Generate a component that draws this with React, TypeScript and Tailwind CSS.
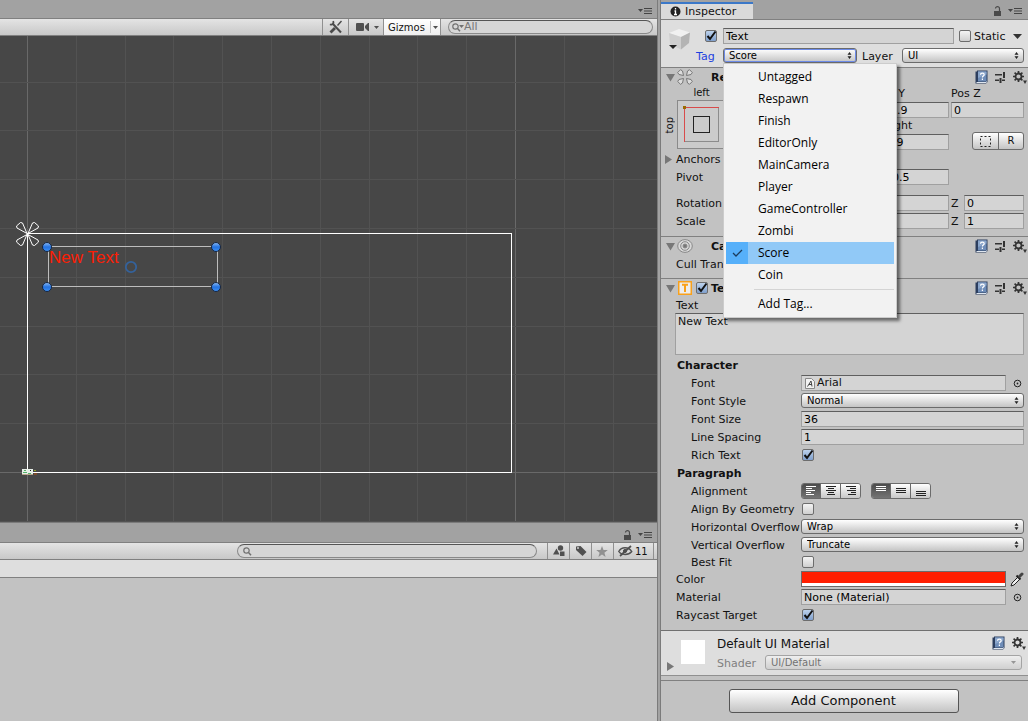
import React, { useState } from 'react';

const tags = [
  'Untagged',
  'Respawn',
  'Finish',
  'EditorOnly',
  'MainCamera',
  'Player',
  'GameController',
  'Zombi',
  'Score',
  'Coin',
];

const fieldClass =
  'h-4 w-full min-w-0 border border-[#a0a0a0] border-t-[#5f5f5f] bg-[#d4d4d4] px-[2px] text-[11px] leading-[14px] text-black outline-none';

const popupClass =
  'block w-full appearance-none rounded-[3px] border border-[#6b6b6b] bg-gradient-to-b from-white to-[#c4c4c4] pl-[5px] pr-4 text-[10px] leading-3 text-black outline-none';

/* ---------- Icons ---------- */

function PaneMenuIcon() {
  return (
    <svg width="14" height="8" viewBox="0 0 14 8" fill="#444">
      <path d="M0 2h5L2.500 5z" />
      <path d="M6 1h8v1H6zM6 3.500h8v1H6zM6 6h8v1H6z" />
    </svg>
  );
}

function LockIcon() {
  return (
    <svg width="9" height="10" viewBox="0 0 9 10">
      <rect x="1" y="5" width="7" height="5" fill="#4a4a4a" />
      <path d="M2.500 2.500C2.500 0 6.500 0 6.500 2.500V5" fill="none" stroke="#4a4a4a" strokeWidth="1.200" />
    </svg>
  );
}

function Caret({ className = '' }: { className?: string }) {
  return (
    <svg width="5" height="3" viewBox="0 0 5 3" className={className}>
      <path d="M0 0h5L2.500 3z" fill="#505050" />
    </svg>
  );
}

function SearchIcon({ caret = false }: { caret?: boolean }) {
  return (
    <svg width="12" height="9" viewBox="0 0 12 9" className="shrink-0">
      <circle cx="3.500" cy="3.500" r="2.700" fill="none" stroke="#707070" strokeWidth="1.200" />
      <path d="M5.500 5.500L8 8.200" stroke="#707070" strokeWidth="1.500" />
      {caret && <path d="M7 2h5L9.500 5z" fill="#707070" />}
    </svg>
  );
}

function ToolsIcon() {
  return (
    <svg width="14" height="14" viewBox="0 0 14 14" fill="none" stroke="#4a4a4a">
      <path d="M4 4l8 8.500" strokeWidth="2" />
      <path d="M1 4.200c2.200 1.200 4.200-.8 3.200-3.200" strokeWidth="1.800" />
      <path d="M12.500 1L8.500 5.500" strokeWidth="1.400" />
      <path d="M6 8l-4.500 4.500" strokeWidth="2.800" />
    </svg>
  );
}

function CameraIcon() {
  return (
    <svg width="13" height="10" viewBox="0 0 13 10" fill="#505050">
      <rect x="0" y="1" width="8" height="8" rx="1" />
      <path d="M9 4l3-3h1v8h-1L9 6z" />
    </svg>
  );
}

function ShapesIcon() {
  return (
    <svg width="12" height="12" viewBox="0 0 12 12" fill="#505050">
      <circle cx="7.500" cy="3" r="2.700" />
      <path d="M0 9.500L3.500 3.500 6.500 9.500z" />
      <rect x="7" y="6.500" width="4.500" height="4.500" />
    </svg>
  );
}

function TagIcon() {
  return (
    <svg width="12" height="12" viewBox="0 0 12 12">
      <path d="M1 1.500L5.500 1 11.500 7 7.500 11 1 5z" fill="#505050" />
      <circle cx="3" cy="3" r="1" fill="#cfcfcf" />
    </svg>
  );
}

function StarIcon() {
  return (
    <svg width="12" height="11" viewBox="0 0 12 11">
      <path d="M6 0l1.500 3.900 4.300.2-3.400 2.700 1.200 4.200L6 8.600 2.400 11l1.200-4.200L.2 4.100l4.300-.2z" fill="#909090" />
    </svg>
  );
}

function HiddenIcon() {
  return (
    <svg width="15" height="12" viewBox="0 0 15 12" fill="none" stroke="#505050">
      <path d="M.7 6.500C3.500 1.500 10.500 1.500 13.800 6.500 10.500 10.500 3.500 10.500.7 6.500z" strokeWidth="1.300" />
      <circle cx="7" cy="6" r="1.600" fill="#505050" />
      <path d="M2 11L13 1" strokeWidth="1.700" />
    </svg>
  );
}

function HelpIcon() {
  return (
    <svg width="13" height="14" viewBox="0 0 13 14">
      <path d="M.5 1.500h1.500V.5h10.500v11.500l-1.500 1.500H.5z" fill="#2c3e5e" />
      <rect x="3" y="1.500" width="8.500" height="10" fill="#6f8db8" />
      <path d="M3 1.500h8.500v3L3 8z" fill="#8ba6cb" />
      <path d="M1.500 12h9.500l1-1v1l-1 1H1.500z" fill="#dfe6ef" />
      <path d="M5.500 4.800c0-2.200 3.700-2.200 3.700 0 0 1.300-1.800 1.200-1.800 2.600M7.400 8.500V10" fill="none" stroke="#fff" strokeWidth="1.200" />
    </svg>
  );
}

function PresetIcon() {
  return (
    <svg width="11" height="11" viewBox="0 0 11 11" fill="#333">
      <path d="M0 2h7v1.500H0zM8 0h2v6H8z" />
      <path d="M0 7.500h4V9H0zM4.500 6h2v5h-2zM7 7.500h3V9H7z" />
    </svg>
  );
}

function GearIcon() {
  return (
    <svg width="14" height="13" viewBox="0 0 14 13">
      <circle cx="5.500" cy="5.500" r="3" fill="none" stroke="#333" strokeWidth="1.800" />
      <path
        d="M5.500 0v2M5.500 9v2M0 5.500h2M9 5.500h2M1.600 1.600L3 3M8 8l1.400 1.400M9.400 1.600L8 3M3 8L1.600 9.400"
        stroke="#333"
        strokeWidth="1.700"
      />
      <path d="M10 9.500h4l-2 3.500z" fill="#333" />
    </svg>
  );
}

function RectTransformIcon() {
  return (
    <svg width="16" height="16" viewBox="0 0 16 16" fill="#dcdcdc" stroke="#777" strokeWidth="1">
      <path d="M3.500.7L.7 3.500l1.300 2L6.500 6.500 5.500 2z" />
      <path d="M12.500.7l2.800 2.800-1.300 2-4.500 1 1-4.500z" />
      <path d="M3.500 15.300L.7 12.500l1.300-2 4.500-1-1 4.500z" />
      <path d="M12.500 15.300l2.800-2.800-1.300-2-4.500-1 1 4.500z" />
    </svg>
  );
}

function CanvasRendererIcon() {
  return (
    <svg width="16" height="14" viewBox="0 0 16 14" fill="none" stroke="#888">
      <ellipse cx="8" cy="7" rx="7.300" ry="6.400" fill="#d8d8d8" />
      <circle cx="8" cy="7" r="4.300" />
      <circle cx="8" cy="7" r="2" fill="#777" />
    </svg>
  );
}

function TextIcon() {
  return (
    <svg width="14" height="14" viewBox="0 0 14 14">
      <rect x=".75" y=".75" width="12.500" height="12.500" fill="#eee" stroke="#f9a11b" strokeWidth="1.500" />
      <path d="M4 3.800h6M7 3.800V11" stroke="#f9a11b" strokeWidth="2" />
    </svg>
  );
}

function CubeIcon() {
  return (
    <svg width="24" height="24" viewBox="0 0 24 24">
      <path d="M11 1l11 3.500-9 4.500L1 5z" fill="#f1f1f1" />
      <path d="M1 5l12 4v12.500L2 16z" fill="#cfcfcf" />
      <path d="M22 4.500L13 9v12.500l8-6.500z" fill="#b4b4b4" />
      <path d="M1 17h8l-4 4z" fill="#222" />
    </svg>
  );
}

function PickerIcon() {
  return (
    <svg width="9" height="9" viewBox="0 0 9 9">
      <circle cx="4.500" cy="4.500" r="3.300" fill="none" stroke="#222" />
      <circle cx="4.500" cy="4.500" r=".9" fill="#222" />
    </svg>
  );
}

function EyedropperIcon() {
  return (
    <svg width="14" height="15" viewBox="0 0 14 15">
      <path d="M1 14l1-3 6-6 2 2-6 6z" fill="#eee" stroke="#222" />
      <path d="M6.500 3.500l4 4" stroke="#222" strokeWidth="2" />
      <path d="M9.500 4.500L12 2" stroke="#444" strokeWidth="3" strokeLinecap="round" />
    </svg>
  );
}

function Foldout({ open = false }: { open?: boolean }) {
  return (
    <svg width="9" height="9" viewBox="0 0 9 9" fill="#777">
      <path d={open ? 'M0 1h9L4.500 8.500z' : 'M1 0l7 4.500L1 9z'} />
    </svg>
  );
}

/* ---------- Controls ---------- */

function Checkbox({ id, label, checked = false }: { id: string; label?: string; checked?: boolean }) {
  return (
    <span className="relative inline-block h-3 w-3 shrink-0">
      <input
        id={id}
        type="checkbox"
        aria-label={label}
        defaultChecked={checked}
        className="peer block h-3 w-3 appearance-none rounded-[2px] border border-[#6d6d6d] bg-gradient-to-b from-[#f4f4f4] to-[#cfcfcf] checked:from-[#bdd2ec] checked:to-[#7f9fcc]"
      />
      <svg
        viewBox="0 0 12 12"
        className="pointer-events-none absolute inset-0 hidden h-3 w-3 overflow-visible peer-checked:block"
      >
        <path d="M2.500 6L5 9 10.500 1.500" fill="none" stroke="#111" strokeWidth="2" />
      </svg>
    </span>
  );
}

function PopupArrows() {
  return (
    <svg width="5" height="7" viewBox="0 0 5 7" className="pointer-events-none absolute right-[5px] top-1">
      <path d="M.5 2.800h4L2.500 0zM.5 4.200h4L2.500 7z" fill="#222" />
    </svg>
  );
}

function Popup({ id, options, disabled = false }: { id: string; options: string[]; disabled?: boolean }) {
  return (
    <span className={`relative mb-px block min-w-0 flex-1 ${disabled ? 'opacity-50' : ''}`}>
      <select id={id} disabled={disabled} className={`${popupClass} h-[15px]`}>
        {options.map((option) => (
          <option key={option}>{option}</option>
        ))}
      </select>
      {disabled ? <Caret className="pointer-events-none absolute right-[6px] top-[6px]" /> : <PopupArrows />}
    </span>
  );
}

interface RowProps {
  label: string;
  htmlFor?: string;
  nested?: boolean;
  short?: boolean;
  children?: React.ReactNode;
}

function Row({ label, htmlFor, nested = false, short = false, children }: RowProps) {
  return (
    <div className={`flex items-center pr-1 ${short ? 'h-4' : 'h-[18px]'}`}>
      <label
        htmlFor={htmlFor}
        className={`w-[140px] shrink-0 whitespace-nowrap pt-[2px] ${nested ? 'pl-[30px]' : 'pl-[15px]'}`}
      >
        {label}
      </label>
      {children}
    </div>
  );
}

interface ComponentHeaderProps {
  title: string;
  icon: React.ReactNode;
  checkbox?: React.ReactNode;
}

function ComponentHeader({ title, icon, checkbox }: ComponentHeaderProps) {
  return (
    <div className="flex h-[18px] items-center pl-[5px] pr-px">
      <Foldout open />
      <span className="ml-[2px] flex w-4 justify-center">{icon}</span>
      <span className="flex w-[18px] items-center pl-[3px]">{checkbox}</span>
      <h2 className="flex-1 pt-[2px] font-bold">{title}</h2>
      <div className="flex items-center gap-[7px]">
        <HelpIcon />
        <PresetIcon />
        <GearIcon />
      </div>
    </div>
  );
}

function AxisField({ axis, name, value }: { axis: string; name: string; value?: string }) {
  return (
    <label className="flex items-center gap-1">
      <span className="w-[9px] shrink-0 pt-[2px]">{axis}</span>
      <input aria-label={`${name} ${axis}`} defaultValue={value} className={fieldClass} />
    </label>
  );
}

function StackedField({ label, value }: { label: string; value: string }) {
  return (
    <label className="block">
      <span className="block h-4 leading-4">{label}</span>
      <input defaultValue={value} className={`${fieldClass} block`} />
    </label>
  );
}

function AlignGroup({ names, icons }: { names: string[]; icons: string[] }) {
  return (
    <div className="flex h-4 overflow-hidden rounded-[3px] border border-[#6b6b6b]">
      {icons.map((lines, i) => (
        <button
          key={names[i]}
          type="button"
          aria-label={names[i]}
          aria-pressed={i === 0}
          className={
            i === 0
              ? 'flex w-[18px] items-center justify-center bg-gradient-to-b from-[#4c4c4c] to-[#747474] text-white'
              : 'flex w-5 items-center justify-center border-l border-[#6b6b6b] bg-gradient-to-b from-white to-[#c8c8c8] text-[#222]'
          }
        >
          <svg width="12" height="10" viewBox="0 0 12 10" fill="none" stroke="currentColor" strokeWidth="1">
            <path d={lines} />
          </svg>
        </button>
      ))}
    </div>
  );
}

/* ---------- Scene view ---------- */

function SceneToolbar() {
  return (
    <div className="flex h-[18px] items-stretch justify-end border-y border-[#808080] bg-gradient-to-b from-[#e4e4e4] to-[#c8c8c8] pr-1">
      <button type="button" aria-label="Tools" className="flex w-[26px] items-center justify-center border-l border-[#909090]">
        <ToolsIcon />
      </button>
      <button type="button" aria-label="Scene camera" className="flex w-[35px] items-center justify-between border-l border-[#909090] pl-[7px] pr-1">
        <CameraIcon />
        <Caret />
      </button>
      <button type="button" className="flex w-[58px] items-center border-x border-[#909090] bg-gradient-to-b from-white to-[#eeeeee] pl-1 text-[10px]">
        <span className="w-[42px] pt-px text-left">Gizmos</span>
        <span className="flex h-3 items-center border-l border-[#c0c0c0] pl-[2px]">
          <Caret />
        </span>
      </button>
      <label className="my-px ml-[7px] flex h-[14px] w-[205px] items-center rounded-full border border-[#8a8a8a] border-t-[#555] bg-[#d6d6d6] pl-[3px]">
        <SearchIcon caret />
        <input aria-label="Search scene" placeholder="All" className="min-w-0 flex-1 bg-transparent text-[11px] leading-3 outline-none placeholder:text-[#777]" />
      </label>
    </div>
  );
}

function SceneCanvas() {
  const handles = [
    [47, 211],
    [216, 211],
    [47, 251],
    [216, 251],
  ];
  const columns = Array.from({ length: 60 }, (_, i) => Math.round(27 + (i - 1) * 48.8));
  const rows = Array.from({ length: 40 }, (_, i) => Math.round(436 + (i - 20) * 48.8));

  return (
    <svg className="block min-h-[480px] w-full flex-1 bg-[#474747]">
      <defs>
        <linearGradient id="handle" x1="0" y1="0" x2="0" y2="1">
          <stop offset="0" stopColor="#8dbcf5" />
          <stop offset="0.5" stopColor="#2472e0" />
          <stop offset="1" stopColor="#3f92f5" />
        </linearGradient>
      </defs>
      <g shapeRendering="crispEdges">
        {columns.map((x, i) => (
          <rect key={x} x={x} y="0" width="1" height="100%" fill={i % 10 === 1 ? '#696969' : '#525252'} />
        ))}
        {rows.map((y, i) => (
          <rect key={y} x="0" y={y} width="100%" height="1" fill={i % 10 === 0 ? '#696969' : '#525252'} />
        ))}
        {/* canvas bounds */}
        <rect x="27.500" y="197.500" width="484" height="239" fill="none" stroke="#fff" />
        {/* selected text rect */}
        <rect x="48.500" y="210.500" width="169" height="40" fill="none" stroke="#bdbdbd" />
      </g>
      {/* anchors */}
      <g fill="none" stroke="#fff" strokeWidth="1">
        <path d="M27 197.500L17 192l-.5-2 4-3.500 2 .5zM28 197.500l4.500-10.500 2-.5 4 3.500-.5 2zM27 198.500l-10 5.500-.5 2 4 3.500 2-.5zM28 198.500l4.500 10.500 2 .5 4-3.500-.5-2z" />
      </g>
      <text x="49" y="227" fill="#fb1e05" className="font-['Liberation_Sans',sans-serif] text-[17px]">
        New Text
      </text>
      {handles.map(([cx, cy]) => (
        <circle key={`${cx}-${cy}`} cx={cx} cy={cy} r="4.500" fill="url(#handle)" stroke="#16253f" />
      ))}
      <circle cx="131" cy="231" r="5.200" fill="none" stroke="#34629c" strokeWidth="1.800" />
      {/* game objects near the world origin */}
      <g shapeRendering="crispEdges">
        <rect x="22" y="433" width="11" height="6" fill="#e8efe8" />
        <path d="M23 436h4v1h-4zM28 437h3v1h-3zM24 434h2v1h-2z" fill="#55b36a" />
        <rect x="30" y="434" width="1" height="1" fill="#222" />
        <rect x="22" y="438" width="11" height="1" fill="#b8a58c" />
        <rect x="34" y="434" width="2" height="1" fill="#8aa520" />
        <rect x="34" y="437" width="3" height="2" fill="#7b4a2a" />
      </g>
    </svg>
  );
}

function ProjectPanel() {
  return (
    <section className="flex h-[199px] shrink-0 flex-col">
      <div className="flex h-5 items-center justify-end gap-[6px] border-t border-[#7b7b7b] pr-[5px] pt-[5px]">
        <LockIcon />
        <PaneMenuIcon />
      </div>
      <div className="flex h-[18px] items-stretch justify-end border-y border-[#808080] bg-gradient-to-b from-[#e4e4e4] to-[#c8c8c8] pr-[3px]">
        <label className="my-px mr-[10px] flex h-[14px] w-[300px] items-center rounded-full border border-[#8a8a8a] border-t-[#555] bg-[#d6d6d6] pl-[5px]">
          <SearchIcon />
          <input aria-label="Search assets" className="min-w-0 flex-1 bg-transparent text-[11px] leading-3 outline-none" />
        </label>
        <button type="button" aria-label="Search by type" className="flex w-[22px] items-center justify-center border-l border-[#909090]">
          <ShapesIcon />
        </button>
        <button type="button" aria-label="Search by label" className="flex w-[22px] items-center justify-center border-l border-[#909090]">
          <TagIcon />
        </button>
        <button type="button" aria-label="Save search" className="flex w-[22px] items-center justify-center border-l border-[#909090] pr-[2px]">
          <StarIcon />
        </button>
        <button type="button" className="flex w-[41px] items-center gap-[2px] border-x border-[#909090] pl-1 text-[10px]">
          <HiddenIcon />
          <span className="pt-px">11</span>
        </button>
      </div>
      <div className="h-[18px] border-b border-[#808080] bg-[#dedede]" />
      <div className="flex-1 bg-[#c2c2c2]" />
    </section>
  );
}

/* ---------- Inspector ---------- */

function TagMenu({ tag, onSelect }: { tag: string; onSelect: (tag: string) => void }) {
  return (
    <div className="absolute left-0 top-full z-10 w-[174px] border border-[#cccccc] bg-[#f2f2f2] p-[2px] font-['Open_Sans',sans-serif] text-[12px] leading-[22px] text-black shadow-[3px_3px_3px_rgba(0,0,0,0.5)]">
      {tags.map((name) => (
        <button
          key={name}
          type="button"
          onClick={() => onSelect(name)}
          className={`flex h-[22px] w-full items-center text-left ${name === tag ? 'bg-[#91c9f7]' : ''}`}
        >
          <span className={`mr-[10px] flex h-[22px] w-[22px] items-center justify-center ${name === tag ? 'bg-[#56b0fa]' : ''}`}>
            {name === tag && (
              <svg width="11" height="8" viewBox="0 0 11 8">
                <path d="M1 4l3 3 6-6" fill="none" stroke="#1c3c5c" strokeWidth="1.300" />
              </svg>
            )}
          </span>
          {name}
        </button>
      ))}
      <div className="ml-7 flex h-[7px] items-center">
        <hr className="w-full border-[#d4d4d4]" />
      </div>
      <button type="button" className="block h-[22px] w-full pl-8 text-left">
        Add Tag...
      </button>
    </div>
  );
}

function ObjectHeader() {
  const [tag, setTag] = useState('Score');
  const [open, setOpen] = useState(true);

  return (
    <div className="flex h-12 border-b border-[#808080] bg-[#dedede] pl-[7px] pr-1 pt-[7px]">
      <div className="w-[26px] shrink-0 pt-px">
        <CubeIcon />
      </div>
      <div className="min-w-0 flex-1">
        <div className="flex h-[18px] items-center">
          <span className="flex w-[29px] shrink-0 justify-end pr-[6px]">
            <Checkbox id="active" label="Active" checked />
          </span>
          <input aria-label="Name" defaultValue="Text" className={`${fieldClass} flex-1`} />
          <span className="ml-[5px] flex shrink-0 items-center gap-[3px]">
            <Checkbox id="static" />
            <label htmlFor="static" className="w-[39px] pt-px">
              Static
            </label>
          </span>
          <svg width="9" height="5" viewBox="0 0 9 5" className="mr-[2px] shrink-0">
            <path d="M0 0h9L4.500 5z" fill="#333" />
          </svg>
        </div>
        <div className="mt-[2px] flex h-[18px] items-center">
          <label htmlFor="tag" className="w-[29px] shrink-0 pl-[2px] pt-px text-[#1c3fe0]">
            Tag
          </label>
          <span className="relative mb-px block w-[134px] shrink-0">
            <select
              id="tag"
              value={tag}
              onChange={(e) => setTag(e.target.value)}
              onMouseDown={() => setOpen(!open)}
              className={`${popupClass} h-[15px] border-[#3d62d8] ring-1 ring-[#6d8be8] ring-inset`}
            >
              {tags.map((name) => (
                <option key={name}>{name}</option>
              ))}
            </select>
            <PopupArrows />
            {open && (
              <TagMenu
                tag={tag}
                onSelect={(name) => {
                  setTag(name);
                  setOpen(false);
                }}
              />
            )}
          </span>
          <label htmlFor="layer" className="w-[45px] shrink-0 pl-[5px] pt-px">
            Layer
          </label>
          <Popup id="layer" options={['UI']} />
        </div>
      </div>
    </div>
  );
}

function RectTransform() {
  return (
    <section className="border-b border-[#808080] pb-[6px]">
      <ComponentHeader title="Rect Transform" icon={<RectTransformIcon />} />
      <div className="flex h-16 pr-1">
        <div className="flex w-[140px] shrink-0">
          <div className="flex w-4 items-center justify-center pl-[2px] pt-[14px]">
            <span className="rotate-180 text-[10px] leading-3 [writing-mode:vertical-rl]">top</span>
          </div>
          <div>
            <div className="h-[14px] pt-px text-center text-[10px] leading-3">left</div>
            <button type="button" aria-label="Anchor presets" className="block border border-[#8a8a8a] bg-[#cbcbcb]">
              <svg width="47" height="47" viewBox="0 0 47 47" fill="none">
                <rect x="6.500" y="6.500" width="34" height="34" stroke="#8c8c8c" />
                <path d="M6.500 41V6.500H41" stroke="#d84b4b" />
                <rect x="15.500" y="15.500" width="16" height="16" stroke="#222" />
                <rect x="5" y="5" width="3" height="3" fill="#9b6a00" />
              </svg>
            </button>
          </div>
        </div>
        <div className="grid flex-1 grid-cols-3 gap-x-[2px]">
          <StackedField label="Pos X" value="104.9" />
          <StackedField label="Pos Y" value="-33.9" />
          <StackedField label="Pos Z" value="0" />
          <StackedField label="Width" value="169" />
          <StackedField label="Height" value="40.9" />
          <div className="flex items-end justify-end">
            <div className="flex h-[18px] overflow-hidden rounded-[3px] border border-[#6b6b6b] bg-gradient-to-b from-white to-[#c4c4c4] text-[10px]">
              <button type="button" aria-label="Blueprint mode" className="flex w-[25px] items-center justify-center">
                <svg width="12" height="11" viewBox="0 0 12 11">
                  <rect x=".5" y=".5" width="10" height="10" fill="none" stroke="#222" strokeDasharray="2 2" />
                </svg>
              </button>
              <button type="button" className="w-[25px] border-l border-[#6b6b6b]">
                R
              </button>
            </div>
          </div>
        </div>
      </div>
      <button type="button" className="flex h-[18px] items-center gap-[3px] pl-[3px]">
        <Foldout />
        <span className="pt-px">Anchors</span>
      </button>
      <Row label="Pivot">
        <div className="grid flex-1 grid-cols-3 gap-x-[2px]">
          <AxisField name="Pivot" axis="X" value="0.5" />
          <AxisField name="Pivot" axis="Y" value="0.5" />
        </div>
      </Row>
      <div className="mt-2">
        <Row label="Rotation">
          <div className="grid flex-1 grid-cols-3 gap-x-[2px]">
            <AxisField name="Rotation" axis="X" />
            <AxisField name="Rotation" axis="Y" />
            <AxisField name="Rotation" axis="Z" value="0" />
          </div>
        </Row>
        <Row label="Scale">
          <div className="grid flex-1 grid-cols-3 gap-x-[2px]">
            <AxisField name="Scale" axis="X" />
            <AxisField name="Scale" axis="Y" />
            <AxisField name="Scale" axis="Z" value="1" />
          </div>
        </Row>
      </div>
    </section>
  );
}

function CanvasRenderer() {
  return (
    <section className="border-b border-[#808080] pb-[5px]">
      <ComponentHeader title="Canvas Renderer" icon={<CanvasRendererIcon />} />
      <Row label="Cull Transparent Mesh" htmlFor="cull">
        <Checkbox id="cull" />
      </Row>
    </section>
  );
}

function TextComponent() {
  return (
    <section className="border-b border-[#707070] pb-[6px]">
      <ComponentHeader
        title="Text (Script)"
        icon={<TextIcon />}
        checkbox={<Checkbox id="text-enabled" label="Text enabled" checked />}
      />
      <div className="pl-[14px] pr-1">
        <label htmlFor="text" className="block h-4 pl-px pt-px leading-4">
          Text
        </label>
        <textarea
          id="text"
          defaultValue="New Text"
          className="block h-[42px] w-full resize-none border border-[#a0a0a0] border-t-[#5f5f5f] bg-[#d4d4d4] px-[2px] pt-px leading-[14px] outline-none"
        />
      </div>

      <h3 className="mt-px h-[18px] pl-4 pt-px font-bold leading-[18px]">Character</h3>
      <Row nested label="Font" htmlFor="font">
        <span className="flex h-4 min-w-0 flex-1 items-center border border-[#a0a0a0] border-t-[#5f5f5f] bg-[#d4d4d4] pl-[3px]">
          <svg width="10" height="12" viewBox="0 0 10 12">
            <path d="M.5 1.500h6l3 3v7h-9z" fill="#f2f2f2" stroke="#888" />
            <path d="M2.500 9.500L6 4l1 5.500M4 7.500h3" fill="none" stroke="#444" />
          </svg>
          <input id="font" readOnly defaultValue="Arial" className="min-w-0 flex-1 bg-transparent pl-[2px] leading-[14px] outline-none" />
        </span>
        <button type="button" aria-label="Select font" className="flex w-[18px] justify-end pr-[2px]">
          <PickerIcon />
        </button>
      </Row>
      <Row nested label="Font Style" htmlFor="font-style">
        <Popup id="font-style" options={['Normal', 'Bold', 'Italic']} />
      </Row>
      <Row nested label="Font Size" htmlFor="font-size">
        <input id="font-size" defaultValue="36" className={fieldClass} />
      </Row>
      <Row nested label="Line Spacing" htmlFor="line-spacing">
        <input id="line-spacing" defaultValue="1" className={fieldClass} />
      </Row>
      <Row nested label="Rich Text" htmlFor="rich-text">
        <span className="flex pl-px">
          <Checkbox id="rich-text" checked />
        </span>
      </Row>

      <h3 className="h-[18px] pl-4 pt-px font-bold leading-[18px]">Paragraph</h3>
      <Row nested label="Alignment">
        <div className="flex gap-[10px]">
          <AlignGroup
            names={['Left', 'Center', 'Right']}
            icons={[
              'M1 .5h10M1 2.500h6M1 4.500h9M1 6.500h5M1 8.500h8',
              'M1 .5h10M3 2.500h6M1 4.500h10M3 6.500h6M2 8.500h8',
              'M1 .5h10M5 2.500h6M2 4.500h9M6 6.500h5M3 8.500h8',
            ]}
          />
          <AlignGroup
            names={['Top', 'Middle', 'Bottom']}
            icons={['M1 .5h10M1 2.500h10M1 4.500h10', 'M1 2.500h10M1 4.500h10M1 6.500h10', 'M1 5.500h10M1 7.500h10M1 9.500h10']}
          />
        </div>
      </Row>
      <Row nested label="Align By Geometry" htmlFor="align-geometry">
        <span className="flex pl-px">
          <Checkbox id="align-geometry" />
        </span>
      </Row>
      <Row nested label="Horizontal Overflow" htmlFor="h-overflow">
        <Popup id="h-overflow" options={['Wrap', 'Overflow']} />
      </Row>
      <Row nested label="Vertical Overflow" htmlFor="v-overflow">
        <Popup id="v-overflow" options={['Truncate', 'Overflow']} />
      </Row>
      <Row nested short label="Best Fit" htmlFor="best-fit">
        <span className="flex pl-px">
          <Checkbox id="best-fit" />
        </span>
      </Row>

      <Row label="Color">
        <button type="button" aria-label="Color" className="h-4 flex-1 border border-[#6b6b6b] bg-white pb-[3px]">
          <span className="block h-full bg-[#ff1e00]" />
        </button>
        <button type="button" aria-label="Pick color" className="flex w-[18px] justify-end">
          <EyedropperIcon />
        </button>
      </Row>
      <Row label="Material" htmlFor="material">
        <input id="material" readOnly defaultValue="None (Material)" className={`${fieldClass} flex-1`} />
        <button type="button" aria-label="Select material" className="flex w-[18px] shrink-0 justify-end pr-[2px]">
          <PickerIcon />
        </button>
      </Row>
      <Row label="Raycast Target" htmlFor="raycast">
        <span className="flex pl-px">
          <Checkbox id="raycast" checked />
        </span>
      </Row>
    </section>
  );
}

function MaterialSection() {
  return (
    <section className="flex h-[45px] border-b border-[#909090] bg-[#dedede] pl-[5px] pr-[2px]">
      <span className="flex w-[15px] items-end pb-1">
        <Foldout />
      </span>
      <span className="mt-[9px] h-6 w-6 bg-white" />
      <div className="flex-1 pl-3 pt-[3px]">
        <div className="flex h-[18px] items-center gap-[7px]">
          <h2 className="flex-1 pt-px text-[12px]">Default UI Material</h2>
          <HelpIcon />
          <GearIcon />
        </div>
        <div className="flex h-5 items-center pr-1 pt-[2px]">
          <label htmlFor="shader" className="w-12 pt-px text-[#808080]">
            Shader
          </label>
          <Popup id="shader" options={['UI/Default']} disabled />
        </div>
      </div>
    </section>
  );
}

function Inspector() {
  return (
    <aside className="flex w-[368px] shrink-0 flex-col border-l border-[#7b7b7b] bg-[#c2c2c2]">
      <div className="flex h-5 items-end justify-between border-b border-[#808080] bg-[#a2a2a2] pr-[6px]">
        <h1 className="flex h-[17px] w-[92px] items-center gap-1 border-t-2 border-[#3b78c8] bg-[#dadada] pl-[9px]">
          <svg width="11" height="11" viewBox="0 0 11 11">
            <circle cx="5.500" cy="5.500" r="5" fill="#222" />
            <path d="M5.500 2v1.600M4.500 5h1v3.500M4 8.500h3" stroke="#fff" strokeWidth="1.300" fill="none" />
          </svg>
          Inspector
        </h1>
        <div className="flex items-center gap-[6px] pb-[3px]">
          <LockIcon />
          <PaneMenuIcon />
        </div>
      </div>
      <ObjectHeader />
      <RectTransform />
      <CanvasRenderer />
      <TextComponent />
      <MaterialSection />
      <div className="mt-1 flex flex-1 items-start justify-center border-t border-[#808080] pb-1 pr-[2px] pt-2">
        <button
          type="button"
          className="h-6 w-[230px] rounded-[3px] border border-[#555] bg-gradient-to-b from-white to-[#c4c4c4] text-[13px] leading-5"
        >
          Add Component
        </button>
      </div>
    </aside>
  );
}

export default function App() {
  return (
    <div className="flex min-h-screen gap-[2px] bg-[#a2a2a2] font-['DejaVu_Sans',sans-serif] text-[11px] leading-[14px] text-[#111]">
      <main className="flex min-w-0 flex-1 flex-col border-r border-[#7b7b7b]">
        <div className="flex h-[18px] items-end justify-end pb-[3px] pr-[5px]">
          <PaneMenuIcon />
        </div>
        <SceneToolbar />
        <SceneCanvas />
        <ProjectPanel />
      </main>
      <Inspector />
    </div>
  );
}
